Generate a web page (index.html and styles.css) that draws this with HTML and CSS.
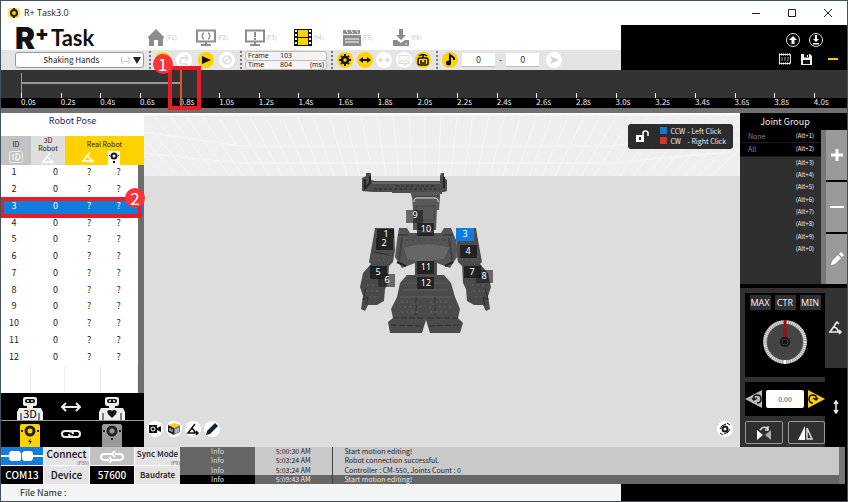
FILE: index.html
```
<!DOCTYPE html>
<html lang="en">
<head>
    <meta charset="UTF-8">
    <meta name="viewport" content="width=device-width, initial-scale=1.0">
    <title>R+ Task3.0</title>
    <link rel="stylesheet" href="styles.css">
</head>
<body>
<div class="window">

    <div class="titlebar">
        <svg width="12" height="10" viewBox="0 0 12 10"><rect width="12" height="10" rx="3" fill="#ffe14d"/><circle cx="6" cy="5" r="3" fill="#ffd200" stroke="#222" stroke-width="2"/><path d="M6 0v2M6 8v2" stroke="#222" stroke-width="2"/></svg>
        <span class="app-name">R+ Task3.0</span>
        <button class="win-btn" aria-label="Minimize"><svg width="10" height="10"><path d="M1 5.500h8" stroke="#222"/></svg></button>
        <button class="win-btn" aria-label="Maximize"><svg width="10" height="10"><path d="M1.500 1.500h7v7h-7z" fill="none" stroke="#222"/></svg></button>
        <button class="win-btn" aria-label="Close"><svg width="10" height="10"><path d="M1 1l8 8M9 1l-8 8" stroke="#222"/></svg></button>
    </div>

    <header class="header">
        <div class="header-left">
            <nav class="nav">
                <div class="logo"><span class="logo-r">R</span><span class="logo-plus">+</span><span class="logo-task">Task</span></div>
                <button class="nav-btn"><svg width="18" height="17" viewBox="0 0 18 17"><path d="M1 9v-1L9 0l8 8v1h-1v8h-5v-6H7v6H2V9z" fill="#8c8c8c"/></svg><small>(F1)</small></button>
                <button class="nav-btn"><svg width="20" height="17" viewBox="0 0 20 17"><path d="M1 1.500h18v11H1z" fill="none" stroke="#8c8c8c" stroke-width="2"/><path d="M5 16h10M10 13v3" stroke="#8c8c8c" stroke-width="2"/><path d="M8 4c-2 0-1 3-2.500 3C7 7 6 10 8 10M12 4c2 0 1 3 2.500 3-1.500 0-.5 3-2.500 3" fill="none" stroke="#8c8c8c" stroke-width="1.500"/></svg><small>(F2)</small></button>
                <button class="nav-btn"><svg width="20" height="17" viewBox="0 0 20 17"><path d="M1 1.500h18v11H1z" fill="none" stroke="#8c8c8c" stroke-width="2"/><path d="M5 16h10M10 13v3M10 3v5M10 9v2" stroke="#8c8c8c" stroke-width="2"/></svg><small>(F3)</small></button>
                <button class="nav-btn"><svg width="18" height="17" viewBox="0 0 18 17"><path d="M0 0h18v17H0z" fill="#111"/><path d="M4 1h10v7H4zM4 9h10v7H4z" fill="#ffd200"/><path d="M2 1v16M16 1v16" stroke="#fff" stroke-width="2" stroke-dasharray="2 2"/></svg><small>(F4)</small></button>
                <button class="nav-btn"><svg width="18" height="17" viewBox="0 0 18 17"><path d="M0 1h17v4H0zM0 6h18v11H0z" fill="#8c8c8c"/><path d="M3 1l2 3M8 1l2 3M13 1l2 3M2 10h14M2 13h14" stroke="#fff"/></svg><small>(F5)</small></button>
                <button class="nav-btn"><svg width="18" height="17" viewBox="0 0 18 17"><path d="M7 0h4v6h3l-5 5-5-5h3zM1 11h4l4 3 4-3h4v6H1z" fill="#8c8c8c"/><path d="M13 15h2" stroke="#fff"/></svg><small>(F6)</small></button>
            </nav>
            <div class="toolbar">
                <button class="motion-select"><span class="motion-name">Shaking Hands</span><span class="motion-key">(--)</span><svg width="8" height="7"><path d="M0 0h8L4 7z" fill="#222"/></svg></button>
                <i class="dots"></i>
                <div class="tools tools-edit">
                    <button class="round on" aria-label="Undo"><svg viewBox="0 0 16 16"><path d="M4 6h6q3 0 3 3t-3 3H7M7 3L4 6l3 3" fill="none" stroke="#111" stroke-width="2"/></svg></button>
                    <button class="round" aria-label="Redo"><svg viewBox="0 0 16 16"><path d="M11 6H7Q4 6 4 9t3 3h5M9 3l3 3-3 3" fill="none" stroke="#dcdcdc" stroke-width="1.500"/></svg></button>
                    <button class="round on" aria-label="Play"><svg viewBox="0 0 16 16"><path d="M4 4l9 4-9 4z" fill="#111"/></svg></button>
                    <button class="round" aria-label="Stop"><svg viewBox="0 0 16 16"><circle cx="8" cy="8" r="4" fill="none" stroke="#dcdcdc" stroke-width="1.500"/><path d="M5 11l6-6" stroke="#dcdcdc" stroke-width="1.500"/></svg></button>
                </div>
                <i class="dots"></i>
                <div class="frame-info">
                    <div class="field"><label for="frame">Frame</label><input id="frame" value="103"></div>
                    <div class="field"><label for="time">Time</label><input id="time" value="804"><span>(ms)</span></div>
                </div>
                <i class="dots"></i>
                <div class="tools tools-view">
                    <button class="round on" aria-label="Settings"><svg viewBox="0 0 16 16"><circle cx="8" cy="8" r="3" fill="none" stroke="#111" stroke-width="2.500"/><path d="M8 2v2M8 12v2M2 8h2M12 8h2M4 4l1 1M11 11l1 1M12 4l-1 1M4 12l1-1" stroke="#111" stroke-width="2"/></svg></button>
                    <button class="round on" aria-label="Width"><svg viewBox="0 0 16 16"><path d="M2 8l4-3v2h4V5l4 3-4 3V9H6v2z" fill="#111"/></svg></button>
                    <button class="round" aria-label="Spread"><svg viewBox="0 0 16 16"><path d="M2 8l3-3v2h2v2H5v2zM14 8l-3-3v2H9v2h2v2z" fill="#dcdcdc"/></svg></button>
                    <button class="round" aria-label="Image"><svg viewBox="0 0 16 16"><path d="M3 3.500h10v8H3zM3 11l3-3 2 2 2-3 3 4M7 13h4" fill="none" stroke="#dcdcdc"/></svg></button>
                    <button class="round on" aria-label="Robot"><svg viewBox="0 0 16 16"><rect x="3" y="6" width="10" height="7" rx="2" fill="none" stroke="#111" stroke-width="1.500"/><path d="M5 9h2M9 9h2M5 11h6M8 3v3M4 4q4-3 8 0" stroke="#111" stroke-width="1.500" fill="none"/></svg></button>
                </div>
                <i class="dots"></i>
                <div class="tools tools-music">
                    <button class="round on" aria-label="Music"><svg viewBox="0 0 16 16"><path d="M8 11V3l4 3v2" fill="none" stroke="#111" stroke-width="2"/><circle cx="6.500" cy="11" r="2.500" fill="#111"/></svg></button>
                    <input class="range" aria-label="From" value="0">
                    <span class="range-dash">-</span>
                    <input class="range" aria-label="To" value="0">
                    <button class="round play-music" aria-label="Play music"><svg viewBox="0 0 16 16"><path d="M4 4l9 4-9 4 2-4z" fill="#d4d4d4"/></svg></button>
                </div>
            </div>
        </div>
        <div class="header-right">
            <div class="header-row header-row-top">
                <button class="icon-btn" aria-label="Upload"><svg width="16" height="16" viewBox="0 0 16 16"><circle cx="8" cy="8" r="6.500" fill="none" stroke="#ddd"/><path d="M8 4l4 4h-2.500v4h-3V8H4z" fill="#fff"/></svg></button>
                <button class="icon-btn" aria-label="Download"><svg width="16" height="16" viewBox="0 0 16 16"><circle cx="8" cy="8" r="6.500" fill="none" stroke="#ddd"/><path d="M8 10L5 7h2V3h2v4h2zM5 11h6v1.500H5z" fill="#fff"/></svg></button>
            </div>
            <div class="header-row">
                <button class="icon-btn" aria-label="Export"><svg width="12" height="12" viewBox="0 0 12 12"><path d="M.5 1.500h11v9H.5z" fill="none" stroke="#ddd"/><path d="M0 1.500h12M0 10.500h12" stroke="#fff" stroke-width="2" stroke-dasharray="1 1"/><path d="M2 5h8M2 7h8" stroke="#999" stroke-dasharray="2 1"/></svg></button>
                <button class="icon-btn" aria-label="Save"><svg width="11" height="11" viewBox="0 0 11 11"><path d="M0 0h9l2 2v9H0z" fill="#eee"/><path d="M3 0h5v3.500H3zM2 6h7v4H2z" fill="#111"/><path d="M6 1h1v2H6z" fill="#eee"/></svg></button>
                <button class="icon-btn collapse" aria-label="Collapse"><svg width="10" height="3"><path d="M0 0h10v2H0z" fill="#f5c800"/></svg></button>
            </div>
        </div>
    </header>

    <section class="timeline">
        <div class="track"><div class="clip"></div></div>
        <ol class="ticks">
            <li>0.0s</li><li>0.2s</li><li>0.4s</li><li>0.6s</li><li>0.8s</li><li>1.0s</li><li>1.2s</li>
            <li>1.4s</li><li>1.6s</li><li>1.8s</li><li>2.0s</li><li>2.2s</li><li>2.4s</li><li>2.6s</li>
            <li>2.8s</li><li>3.0s</li><li>3.2s</li><li>3.4s</li><li>3.6s</li><li>3.8s</li><li>4.0s</li>
        </ol>
        <div class="cursor"></div>
        <div class="mark mark-time"><b>1</b></div>
    </section>

    <main class="main">
        <aside class="pose">
            <h2>Robot Pose</h2>
            <div class="pose-body">
                <table>
                    <thead>
                        <tr>
                            <th class="col-id">ID<svg width="14" height="12" viewBox="0 0 14 12"><rect x=".5" y=".5" width="13" height="11" rx="2" fill="none" stroke="#eee"/><path d="M4 3v6M7 3v6h2q2-1 2-3T9 3z" fill="none" stroke="#eee" stroke-width="1.500"/></svg></th>
                            <th class="col-3d">3D<br>Robot<svg width="14" height="12" viewBox="0 0 14 12"><path d="M9 1L2 10h10M6 5q3 1 3 5M10 8l2 2-2 2" fill="none" stroke="#fff" stroke-width="1.500"/></svg></th>
                            <th class="col-real" colspan="2">Real Robot
                                <div class="real-icons">
                                    <svg width="14" height="12" viewBox="0 0 14 12"><path d="M9 1L2 10h10M6 5q3 1 3 5M10 8l2 2-2 2" fill="none" stroke="#fff" stroke-width="1.500"/></svg>
                                    <svg width="12" height="14" viewBox="0 0 12 14"><path d="M0 0h12v14H0z" fill="#fff"/><circle cx="6" cy="5" r="2.500" fill="none" stroke="#111" stroke-width="2"/><path d="M1 4h1v1H1zM10 4h1v1h-1zM5 10h2v2H5z" fill="#111"/></svg>
                                </div>
                            </th>
                        </tr>
                    </thead>
                    <tbody>
                        <tr><td>1</td><td>0</td><td>?</td><td>?</td></tr>
                        <tr><td>2</td><td>0</td><td>?</td><td>?</td></tr>
                        <tr class="selected"><td>3</td><td>0</td><td>?</td><td>?</td></tr>
                        <tr><td>4</td><td>0</td><td>?</td><td>?</td></tr>
                        <tr><td>5</td><td>0</td><td>?</td><td>?</td></tr>
                        <tr><td>6</td><td>0</td><td>?</td><td>?</td></tr>
                        <tr><td>7</td><td>0</td><td>?</td><td>?</td></tr>
                        <tr><td>8</td><td>0</td><td>?</td><td>?</td></tr>
                        <tr><td>9</td><td>0</td><td>?</td><td>?</td></tr>
                        <tr><td>10</td><td>0</td><td>?</td><td>?</td></tr>
                        <tr><td>11</td><td>0</td><td>?</td><td>?</td></tr>
                        <tr><td>12</td><td>0</td><td>?</td><td>?</td></tr>
                    </tbody>
                </table>
                <div class="pose-empty"><i></i><i></i><i></i><i></i></div>
                <div class="mark mark-joint"><b>2</b></div>
            </div>
            <div class="pose-actions">
                <button aria-label="3D robot"><svg width="26" height="24" viewBox="0 0 26 24"><rect x="6" y="1" width="14" height="9" rx="2" fill="#eee"/><rect x="8" y="3" width="10" height="4" rx="2" fill="#111"/><circle cx="11" cy="5" r="1" fill="#fff"/><circle cx="15" cy="5" r="1" fill="#fff"/><path d="M10 10h6v2h8l2 4v8H0v-8l2-4h8z" fill="#eee"/><path d="M4 17v7M22 17v7" stroke="#111"/><text x="13" y="22" class="icon-3d">3D</text></svg></button>
                <button aria-label="Copy pose"><svg width="22" height="10" viewBox="0 0 22 10"><path d="M2 5h18M6 1L2 5l4 4M16 1l4 4-4 4" fill="none" stroke="#eee" stroke-width="2"/></svg></button>
                <button aria-label="Real robot"><svg width="26" height="24" viewBox="0 0 26 24"><rect x="6" y="1" width="14" height="9" rx="2" fill="#eee"/><rect x="8" y="3" width="10" height="4" rx="2" fill="#111"/><circle cx="11" cy="5" r="1" fill="#fff"/><circle cx="15" cy="5" r="1" fill="#fff"/><path d="M10 10h6v2h8l2 4v8H0v-8l2-4h8z" fill="#eee"/><path d="M4 17v7M22 17v7" stroke="#111"/><path d="M13 22l-4-4q-2-4 2-4 1 0 2 1 1-1 2-1 4 0 2 4z" fill="#111"/></svg></button>
            </div>
            <div class="pose-actions">
                <button aria-label="Torque on"><svg width="20" height="23" viewBox="0 0 20 23"><path d="M0 2q0-2 2-2h16q2 0 2 2v21H0z" fill="#ffd200"/><circle cx="10" cy="7" r="4" fill="none" stroke="#222" stroke-width="3"/><path d="M1 6h2v2H1zM17 6h2v2h-2zM11 14l-3 4h2l-1 3 3-4h-2z" fill="#222"/></svg></button>
                <button aria-label="Link"><svg width="22" height="10" viewBox="0 0 22 10"><path d="M13 7q-1 1-3 1H5Q2 8 2 5t3-3h4q4 0 4 3M9 3q1-1 3-1h5q3 0 3 3t-3 3h-4Q9 8 9 5" fill="none" stroke="#eee" stroke-width="2"/></svg></button>
                <button aria-label="Torque off"><svg width="20" height="23" viewBox="0 0 20 23"><path d="M0 2q0-2 2-2h16q2 0 2 2v21H0z" fill="#999"/><circle cx="10" cy="7" r="4" fill="none" stroke="#222" stroke-width="3"/><path d="M1 6h2v2H1zM17 6h2v2h-2zM9 14h2v2H9z" fill="#222"/></svg></button>
            </div>
        </aside>

        <section class="viewport">
            <svg class="scene" viewBox="144 113 596 334" preserveAspectRatio="xMidYMin slice">
                <path d="M144 113h596v334H144z" fill="#ddd"/>
                <path d="M144 115h596v61H144z" fill="#eee"/>
                <path d="M105 115l60 61M121 115l57 61M137 115l54 61M153 115l51 61M169 115l48 61M185 115l45 61M201 115l42 61M217 115l39 61M233 115l36 61M249 115l33 61M265 115l30 61M281 115l27 61M297 115l24 61M313 115l21 61M329 115l18 61M345 115l15 61M361 115l12 61M377 115l9 61M393 115l6 61M409 115l3 61M425 115v61M441 115l-3 61M457 115l-6 61M473 115l-9 61M489 115l-12 61M505 115l-15 61M521 115l-18 61M537 115l-21 61M553 115l-24 61M569 115l-27 61M585 115l-30 61M601 115l-33 61M617 115l-36 61M633 115l-39 61M649 115l-42 61M665 115l-45 61M681 115l-48 61M697 115l-51 61M713 115l-54 61M729 115l-57 61M745 115l-60 61M761 115l-63 61M777 115l-66 61M144 132l96 14h370l130-16M144 153l96 10h370l130-12" fill="none" stroke="#f5f5f5"/>
                <path d="M144 113h596v2H144z" fill="#fff"/>

                <!-- head bar and neck -->
                <path d="M362 178l4-2v-3h5v7l4 1h65v-5l1-3h3v5l3 2v11l-3 1h-2v2h-18v-1h-32v-1h-19l-11-1z" fill="#4c4c4c"/>
                <path d="M365 179v9l5-5v-7M444 177v11" stroke="#222" stroke-width="2" fill="none"/>
                <path d="M372 183h68" stroke="#666" stroke-width="2"/>
                <path d="M374 189h62M396 186h40" stroke="#2b2b2b" stroke-dasharray="3 2" fill="none"/>
                <path d="M410 192h30v5l-1 13h-2l-1 20h-23v-20l-1-13z" fill="#595959"/>
                <path d="M414 202v-2l2-2h20l2 2v2" fill="none" stroke="#ddd"/>
                <path d="M412 196h27M416 206h18v14h-18z" fill="none" stroke="#444"/>

                <!-- arms -->
                <g id="arm">
                    <path d="M375 228h19l1 22-2 12-4 4h-16l-4-4 4-22z" fill="#4d4d4d"/>
                    <path d="M371 264h18l-1 19-3 6-1 12-7 4h-9l-3 6-4-2 2-13-3-9 3-14z" fill="#4a4a4a"/>
                    <path d="M372 256h18M373 260h16M367 285h16M366 291h15M369 297h10" stroke="#626262" stroke-dasharray="2 3"/>
                    <path d="M374 252l15 3M370 266l15 3M366 288l-3 12 5-3-2 8" stroke="#2b2b2b" fill="none"/>
                </g>
                <use href="#arm" transform="matrix(-1 0 0 1 851 0)"/>

                <!-- body -->
                <path d="M399 228h8l3 5h31l3-5h7l5 12 1 17-7 11-13-5h-22l-13 5-7-11 2-17z" fill="#555"/>
                <path d="M402 238l-3 22M449 238l3 22M398 235h10M443 235h10" stroke="#404040" stroke-width="2"/>
                <path d="M403 247l15-3h17l15 3-5 12-20 4-18-3z" fill="#666" stroke="#505050"/>
                <path d="M405 240h41" stroke="#444" stroke-dasharray="4 2"/>
                <path d="M397 262l9 4M453 262l-8 4" stroke="#222" stroke-width="2"/>

                <!-- legs -->
                <path d="M415 263h22v12h7l7 8 4 14 5 12-2 9 5 5-3 10h-30l-4-13-4 13h-32l-2-11 5-4-2-9 6-12 3-14 7-8h8z" fill="#4b4b4b"/>
                <path d="M404 283h17M431 283h17M402 290h46M400 297h53" stroke="#606060"/>
                <path d="M401 302h18M399 307h22M401 312h20M430 302h19M429 307h22M430 312h20" stroke="#666" stroke-dasharray="2 3"/>
                <path d="M393 318h30M428 318h32M391 325l30 1M429 326l31-1M416 297v18M435 297v18" stroke="#303030" stroke-dasharray="6 2"/>

                <!-- joint numbers -->
                <g class="joint">
                    <path class="faded" d="M406 210h17v13h-17zM378 274h17v13h-17zM476 270h17v13h-17z"/>
                    <path d="M377 229h17v9h-17zM376 238h17v12h-17zM417 223h17v13h-17zM460 245h17v13h-17zM370 266h17v13h-17zM464 266h17v12h-17zM417 261h17v13h-17zM417 277h17v12h-17z"/>
                    <path class="active" d="M456 228h18v13h-18z"/>
                    <text x="415" y="218">9</text><text x="426" y="232">10</text>
                    <text x="386" y="237">1</text><text x="384" y="246">2</text>
                    <text x="465" y="237">3</text><text x="468" y="254">4</text>
                    <text x="378" y="275">5</text><text x="387" y="283">6</text>
                    <text x="472" y="275">7</text><text x="484" y="279">8</text>
                    <text x="426" y="270">11</text><text x="426" y="286">12</text>
                </g>
            </svg>
            <div class="legend">
                <svg width="14" height="12" viewBox="0 0 14 12"><path d="M0 5h8v7H0z" fill="#fff"/><path d="M7 5V3q0-2 2.500-2T12 3v3" fill="none" stroke="#fff" stroke-width="1.500"/><path d="M3 7h2v3H3z" fill="#333"/></svg>
                <dl>
                    <dt class="ccw">CCW</dt><dd>- Left Click</dd>
                    <dt class="cw">CW</dt><dd>- Right Click</dd>
                </dl>
            </div>
            <div class="view-tools">
                <button class="round" aria-label="Camera"><svg viewBox="0 0 16 16"><path d="M2 4h8v8H2zM10 7l4-2v6l-4-2z" fill="#111"/><circle cx="6" cy="8" r="2" fill="none" stroke="#fff"/></svg></button>
                <button class="round" aria-label="Cube"><svg viewBox="0 0 16 16"><path d="M8 2l6 2-6 3-6-3z" fill="#ffd200"/><path d="M2 4l6 3v7l-6-3z" fill="#222"/><path d="M14 4L8 7v7l6-3z" fill="#777"/><path d="M4 7v3M6 8v3M10 8v4M12 7v4" stroke="#eee"/></svg></button>
                <button class="round" aria-label="Angle"><svg viewBox="0 0 16 16"><path d="M10 3L3 12h10M6 7q3 1 4 5M11 10l2 2-2 2" fill="none" stroke="#111" stroke-width="1.500"/></svg></button>
                <button class="round" aria-label="Edit"><svg viewBox="0 0 16 16"><path d="M2 14l1-4 8-8 3 3-8 8z" fill="#18203a"/></svg></button>
                <button class="round view-reset" aria-label="Reset view"><svg viewBox="0 0 16 16"><circle cx="8" cy="8" r="2.500" fill="none" stroke="#111" stroke-width="2"/><path d="M3 8q1-4 6-5M13 8q-1 4-6 5M10 2l3 2M3 12l3 2" fill="none" stroke="#111"/></svg></button>
            </div>
        </section>

        <aside class="side">
            <h2>Joint Group</h2>
            <div class="groups">
                <ul>
                    <li class="named"><span>None</span><kbd>(Alt+1)</kbd></li>
                    <li class="named"><span>All</span><kbd>(Alt+2)</kbd></li>
                    <li><kbd>(Alt+3)</kbd></li>
                    <li><kbd>(Alt+4)</kbd></li>
                    <li><kbd>(Alt+5)</kbd></li>
                    <li><kbd>(Alt+6)</kbd></li>
                    <li><kbd>(Alt+7)</kbd></li>
                    <li><kbd>(Alt+8)</kbd></li>
                    <li><kbd>(Alt+9)</kbd></li>
                    <li><kbd>(Alt+0)</kbd></li>
                </ul>
                <div class="group-buttons">
                    <button aria-label="Add"><svg width="14" height="14"><path d="M7 1v12M1 7h12" stroke="#fff" stroke-width="3"/></svg></button>
                    <button aria-label="Remove"><svg width="14" height="14"><path d="M0 7h14" stroke="#fff" stroke-width="2"/></svg></button>
                    <button aria-label="Edit group"><svg width="14" height="14" viewBox="0 0 14 14"><path d="M1 13l1-4 6-6 3 3-6 6zM9 2l2-2 3 3-2 2z" fill="#fff"/></svg></button>
                </div>
            </div>
            <div class="control">
                <div class="control-main">
                    <div class="dial-box">
                        <div class="presets"><button>MAX</button><button>CTR</button><button>MIN</button></div>
                        <svg width="46" height="46" viewBox="0 0 46 46"><circle cx="23" cy="23" r="20" fill="#444" stroke="#999" stroke-width="4"/><circle cx="23" cy="23" r="20" fill="none" stroke="#eee" stroke-width="3" stroke-dasharray="1 1"/><path d="M23 41v4" stroke="#fff" stroke-width="2"/><path d="M23 1v22" stroke="#a30d12" stroke-width="3"/><circle cx="23" cy="23" r="5" fill="#111"/><circle cx="23" cy="23" r="3" fill="none" stroke="#444"/></svg>
                    </div>
                    <div class="angle-box">
                        <button aria-label="Turn left"><svg width="18" height="18" viewBox="0 0 18 18"><path d="M0 9l17-9v18z" fill="#bbb"/><path d="M9 9q-1-4 3-4t4 4-4 4M7 8l2 2 3-2" fill="none" stroke="#111" stroke-width="1.500"/></svg></button>
                        <input aria-label="Angle" value="0.00">
                        <button aria-label="Turn right"><svg width="18" height="18" viewBox="0 0 18 18"><path d="M18 9L1 0v18z" fill="#ffd200"/><path d="M9 9q1-4-3-4T2 9t4 4M11 8l-2 2-3-2" fill="none" stroke="#111" stroke-width="1.500"/></svg></button>
                    </div>
                    <div class="flip-buttons">
                        <button aria-label="Swap"><svg width="14" height="14" viewBox="0 0 14 14"><path d="M0 4l6 5-6 5z" fill="#fff"/><path d="M14 4L8 9l6 5z" fill="#aaa"/><path d="M3 4q4-5 8-1M8 4h3V0" fill="none" stroke="#ddd" stroke-width="1.500"/></svg></button>
                        <button aria-label="Mirror"><svg width="16" height="14" viewBox="0 0 16 14"><path d="M7 0v14H0z" fill="#fff"/><path d="M9 2v11h5z" fill="none" stroke="#ddd" stroke-width="1.500"/></svg></button>
                    </div>
                </div>
                <div class="tabs">
                    <button class="tab-on" aria-label="Angle tab"><svg width="14" height="14" viewBox="0 0 14 14"><path d="M8 1L1 11h11M5 6q4 1 4 5M10 9l2 2-2 2M6 3l2-2 2 2" fill="none" stroke="#eee" stroke-width="1.500"/></svg></button>
                    <button aria-label="Move tab"><svg width="6" height="14" viewBox="0 0 6 14"><path d="M3 2v10M1 4l2-3 2 3M1 10l2 3 2-3" fill="none" stroke="#eee" stroke-width="1.500"/></svg></button>
                </div>
            </div>
        </aside>
    </main>

    <section class="status">
        <div class="connection">
            <button class="cell blue" aria-label="Connected"><svg width="42" height="12" viewBox="0 0 42 12"><path d="M0 6h9M31 6h11" stroke="#fff" stroke-width="2"/><path d="M8 4q0-3 3-3h7l2 2v7l-2 1h-7q-3 0-3-3zM21 3l2-2h6q3 0 3 3v4q0 3-3 3h-6l-2-2z" fill="#fff"/></svg></button>
            <button class="cell keyed">Connect<small>(F10)</small></button>
            <button class="cell grey" aria-label="Sync"><svg width="26" height="13" viewBox="0 0 26 13"><path d="M10 10H6Q2 10 2 7t4-3h9M16 4h4q4 0 4 3t-4 3h-9M16 1l-3 3 3 3M10 7l3 3-3 3" fill="none" stroke="#fff" stroke-width="2"/></svg></button>
            <button class="cell keyed small">Sync Mode<small>(F9)</small></button>
            <div class="cell black">COM13</div>
            <button class="cell">Device</button>
            <div class="cell black">57600</div>
            <button class="cell small">Baudrate</button>
        </div>
        <table class="log">
            <tr><td>Info</td><td>5:00:30 AM</td><td>Start motion editing!</td></tr>
            <tr><td>Info</td><td>5:03:24 AM</td><td>Robot connection successful.</td></tr>
            <tr><td>Info</td><td>5:03:24 AM</td><td>Controller : CM-550, Joints Count : 0</td></tr>
            <tr class="last"><td>Info</td><td>5:09:43 AM</td><td>Start motion editing!</td></tr>
        </table>
    </section>

    <footer class="footer"><div class="file-name">File Name :</div></footer>
</div>
</body>
</html>
```

FILE: styles.css
```
* {
    box-sizing: border-box;
}
body {
    margin: 0;
    font-family: "Noto Sans CJK KR", "Noto Sans", sans-serif;
    font-size: 9px;
    line-height: 12px;
    color: #222;
    background: #000;
}
button, input {
    font: inherit;
    color: inherit;
    margin: 0;
    padding: 0;
    border: none;
    background: none;
    min-width: 0;
}
button {
    display: flex;
    align-items: center;
    justify-content: center;
    white-space: nowrap;
    cursor: pointer;
}
svg {
    display: block;
    flex: none;
}
h2 {
    margin: 0;
    font-size: 9px;
    font-weight: 400;
    text-align: center;
}
.window {
    display: flex;
    flex-direction: column;
    min-height: 100vh;
    border: 1px solid #43505f;
    overflow: hidden;
}

/* title bar */
.titlebar {
    display: flex;
    align-items: center;
    height: 24px;
    padding: 0 1px 0 7px;
    background: #fff;
}
.app-name {
    flex: 1;
    margin-left: 4px;
    font-family: "Open Sans", sans-serif;
}
.win-btn {
    width: 36px;
    height: 22px;
}

/* header */
.header {
    display: flex;
    height: 45px;
}
.header-left {
    flex: 0 0 73.300%;
    background: #fff;
}
.header-right {
    flex: 1;
    background: #000;
    display: flex;
    flex-direction: column;
    align-items: flex-end;
    padding: 6px 9px 0 0;
}
.header-row {
    display: flex;
    align-items: center;
    gap: 10px;
    height: 20px;
}
.header-row-top {
    gap: 7px;
    padding-right: 14px;
    height: 18px;
}
.collapse {
    margin-left: 6px;
}
.nav {
    display: flex;
    align-items: center;
    height: 25px;
    padding-left: 14px;
}
.logo {
    display: flex;
    align-items: flex-start;
    width: 132px;
    color: #111;
    line-height: 24px;
}
.logo-r {
    font-family: Inter, sans-serif;
    font-size: 30px;
    font-weight: 900;
}
.logo-plus {
    font-family: Inter, sans-serif;
    font-size: 20px;
    font-weight: 900;
    line-height: 14px;
}
.logo-task {
    margin-left: 2px;
    font-family: Lato, sans-serif;
    font-size: 22px;
    font-weight: 700;
}
.nav-btn {
    width: 49px;
    justify-content: flex-start;
    gap: 1px;
}
.nav-btn small {
    font-size: 6px;
    color: #c4c4c4;
}
.toolbar {
    display: flex;
    align-items: center;
    height: 20px;
    padding-left: 14px;
    background: #e4e4e4;
}
.motion-select {
    width: 129px;
    height: 16px;
    padding-right: 2px;
    border: 1px solid #999;
    border-radius: 3px;
    background: #fff;
    font-size: 8px;
}
.motion-name {
    flex: 1;
    padding-left: 6px;
}
.motion-key {
    margin-right: 3px;
    font-size: 7px;
    color: #888;
}
.dots {
    height: 18px;
    margin: 0 4px 0 5px;
    border-left: 2px dotted #777;
}
.tools {
    display: flex;
    align-items: center;
    justify-content: space-between;
}
.tools-edit {
    width: 80px;
}
.tools-view {
    width: 94px;
}
.tools-music {
    gap: 4px;
}
.round {
    width: 16px;
    height: 16px;
    border-radius: 50%;
    background: #fff;
}
.round svg {
    width: 16px;
    height: 16px;
}
.round.on {
    background: #ffd200;
}
.frame-info {
    width: 80px;
}
.field {
    display: flex;
    height: 8px;
    margin: 1px 0;
    padding: 0 2px;
    font-family: "Noto Sans", sans-serif;
    font-size: 7px;
    line-height: 8px;
    background: #f4f4f4;
    border-radius: 2px;
    outline: 1px solid #bbb;
}
.field label {
    width: 32px;
}
.field input {
    flex: 1;
    width: 20px;
}
.range {
    width: 33px;
    height: 14px;
    border-bottom: 1px solid #bbb;
    background: #fff;
    text-align: center;
    color: #2a3554;
}
.play-music {
    margin-left: 3px;
}

/* timeline */
.timeline {
    position: relative;
    height: 43px;
    background: #333;
    border-bottom: 5px solid #707070;
}
.track {
    height: 23px;
    padding: 3px 0 0 20px;
}
.clip {
    width: 19.300%;
    height: 20px;
    border-left: 1px solid #999;
    background: linear-gradient(#999, #999) 0 9px / 100% 2px no-repeat;
}
.ticks {
    display: flex;
    margin: 0;
    padding: 0 0 0 20px;
    list-style: none;
    overflow: hidden;
    background: linear-gradient(#333 5px, #000 5px);
}
.ticks li {
    flex: 0 0 4.800%;
    height: 15px;
    padding-top: 4px;
    font-size: 8px;
    line-height: 10px;
    color: #eee;
    background: linear-gradient(#fff, #fff) 0 0 / 1px 5px no-repeat;
}
.cursor {
    position: absolute;
    left: 21.100%;
    top: 0;
    width: 2px;
    height: 36px;
    background: #e0561c;
}

/* red callouts over the work area */
.mark {
    position: absolute;
    border: 4px solid #ed1c24;
}
.mark b {
    position: absolute;
    width: 20px;
    height: 20px;
    border-radius: 50%;
    background: #f8333c;
    color: #fff;
    font-size: 17px;
    font-weight: 400;
    line-height: 20px;
    text-align: center;
}
.mark-time {
    left: 19.700%;
    top: -4px;
    width: 33px;
    height: 44px;
    z-index: 2;
}
.mark-time b {
    left: -19px;
    top: -16px;
}
.mark-joint {
    left: -1px;
    top: 61px;
    width: 142px;
    height: 21px;
    z-index: 2;
}
.mark-joint b {
    right: -7px;
    top: -13px;
}

/* main area */
.main {
    display: grid;
    grid-template-columns: 143px 1fr 107px;
    flex: 1;
}
.pose {
    display: flex;
    flex-direction: column;
    background: #fff;
}
.pose h2 {
    height: 23px;
    line-height: 16px;
    color: #1d2b50;
}
.pose-body {
    position: relative;
    flex: 1;
    display: flex;
    flex-direction: column;
    border-right: 6px solid #6e6e6e;
}
.pose table {
    width: 143px;
    height: 230px;
    border-collapse: collapse;
    table-layout: fixed;
}
.pose th {
    height: 29px;
    padding: 2px 0 0;
    font-size: 7px;
    font-weight: 400;
    line-height: 8px;
    vertical-align: top;
}
.pose th svg {
    margin: 0 auto;
}
.pose th.col-id {
    width: 30px;
    padding-top: 4px;
    background: #c2c2c2;
}
.pose th.col-id svg {
    margin-top: 3px;
}
.pose th.col-3d {
    width: 34px;
    padding-top: 0;
    background: #dedede;
}
.pose th.col-real {
    padding-top: 4px;
    background: #ffd200;
}
.real-icons {
    display: flex;
    padding: 3px 18px 0 10px;
}
.pose td {
    padding: 0 0 2px 22px;
    font-size: 9px;
    line-height: 12px;
    text-align: left;
}
.pose td:first-child {
    padding: 0 4px 2px 0;
    text-align: center;
}
.pose td:last-child {
    padding-left: 12px;
}
.selected td {
    color: #fff;
    background: #0f7ddb;
}
.pose-empty {
    display: grid;
    grid-template-columns: 30px 34px 36px 1fr;
    flex: 1;
}
.pose-empty i {
    border-right: 1px solid #eee;
}
.pose-actions {
    display: grid;
    grid-template-columns: 1fr 1fr 1fr;
    height: 27px;
    padding: 0 12px 0 8px;
    background: #000;
}
.pose-actions + .pose-actions {
    border-top: 1px solid #999;
}
.pose-actions button {
    align-items: flex-end;
}
.pose-actions button:nth-child(2) {
    align-items: center;
}
.icon-3d {
    font-size: 11px;
    text-anchor: middle;
}

/* 3D viewport */
.viewport {
    position: relative;
    overflow: hidden;
    background: #ddd;
}
.scene {
    position: absolute;
    width: 100%;
    height: 100%;
}
.joint path {
    fill: #1c1c1c;
    fill-opacity: .85;
}
.joint .faded {
    fill-opacity: .6;
}
.joint .active {
    fill: #0f7ddb;
    fill-opacity: 1;
}
.joint text {
    font-family: "Noto Sans", sans-serif;
    font-size: 9px;
    fill: #fff;
    text-anchor: middle;
}
.legend {
    position: absolute;
    top: 11px;
    right: 7px;
    display: flex;
    align-items: center;
    gap: 10px;
    padding: 2px 7px 3px 8px;
    border-radius: 3px;
    background: #2c2c2c;
    color: #eee;
    font-size: 7px;
    line-height: 10px;
}
.legend dl {
    display: grid;
    grid-template-columns: 27px auto;
    margin: 0;
}
.legend dt, .legend dd {
    margin: 0;
    white-space: nowrap;
}
.legend dt::before {
    content: "";
    display: inline-block;
    width: 7px;
    height: 7px;
    margin-right: 3px;
    background: #1b75c9;
}
.legend dt.cw::before {
    background: #ce3636;
}
.view-tools {
    position: absolute;
    left: 3px;
    right: 7px;
    bottom: 10px;
    display: flex;
    gap: 3px;
}
.view-reset {
    margin-left: auto;
}

/* right side */
.side {
    display: flex;
    flex-direction: column;
    background: #000;
    color: #eee;
}
.side h2 {
    height: 17px;
    padding-right: 17px;
    line-height: 17px;
}
.groups {
    display: flex;
    height: 154px;
    background: #777;
}
.groups ul {
    display: flex;
    flex-direction: column;
    width: 81px;
    margin: 0;
    padding: 0 0 29px;
    list-style: none;
    background: #2f2f2f;
}
.groups li {
    flex: 1;
    display: flex;
    align-items: center;
    padding: 0 7px 0 8px;
    line-height: 10px;
}
.groups li.named {
    background: #000;
    border-bottom: 1px solid #1a1a1a;
}
.groups li span {
    color: #888;
    font-size: 7px;
}
.groups kbd {
    margin-left: auto;
    font-family: inherit;
    font-size: 6px;
}
.group-buttons {
    display: flex;
    flex-direction: column;
    gap: 2px;
    width: 21px;
    margin-left: auto;
    background: #000;
}
.group-buttons button {
    flex: 1;
    background: #999;
}
.control {
    display: flex;
    flex: 1;
    margin-top: 4px;
    background: #303030;
}
.control-main {
    display: flex;
    flex-direction: column;
    flex: 1;
    gap: 5px;
    padding: 5px 0 3px 5px;
}
.dial-box {
    display: flex;
    flex-direction: column;
    align-items: center;
    gap: 9px;
    flex: 1;
    padding-top: 2px;
    background: #000;
}
.presets {
    display: flex;
    gap: 4px;
    font-family: "Noto Sans", sans-serif;
}
.presets button {
    width: 21px;
    height: 15px;
    background: #303030;
}
.angle-box {
    display: flex;
    align-items: center;
    justify-content: space-between;
    height: 34px;
    background: #000;
}
.angle-box input {
    width: 38px;
    height: 18px;
    border-radius: 2px;
    background: #fff;
    color: #2a3554;
    font-size: 7px;
    text-align: center;
}
.flip-buttons {
    display: flex;
    gap: 5px;
}
.flip-buttons button {
    flex: 1;
    height: 23px;
    border: 1px solid #999;
    border-radius: 2px;
}
.tabs {
    display: flex;
    flex-direction: column;
    width: 22px;
}
.tabs button {
    flex: 1;
    background: #000;
}
.tabs .tab-on {
    background: #333;
}

/* connection cells and log */
.status {
    display: flex;
    height: 37px;
    background: #000;
}
.connection {
    display: grid;
    grid-template-columns: 42px 45px 44px 45px;
    grid-template-rows: 18px 18px;
    gap: 1px;
    width: 179px;
    background: #fff;
}
.cell {
    display: flex;
    align-items: center;
    justify-content: center;
    background: #e4e4e4;
    color: #111;
    font-size: 10px;
    font-weight: 500;
    line-height: 12px;
}
.cell.small {
    font-size: 8px;
}
.cell.keyed {
    flex-direction: column;
    line-height: 12px;
}
.cell small {
    align-self: flex-end;
    font-size: 5px;
    line-height: 5px;
    color: #777;
}
.cell.blue {
    background: #0f7ddb;
}
.cell.grey {
    background: #c2c2c2;
}
.cell.black {
    background: #000;
    color: #fff;
}
.log {
    flex: 1;
    height: 37px;
    margin-right: 2px;
    border-collapse: collapse;
    border-right: 6px solid #777;
    background: #c9c9c9;
    font-size: 7px;
    line-height: 9px;
}
.log td {
    height: 9px;
    padding: 0 12px;
    white-space: nowrap;
}
.log td:first-child {
    width: 75px;
    background: #666;
    color: #ddd;
    text-align: center;
}
.log td:nth-child(2) {
    width: 77px;
    border-right: 1px solid #444;
    text-align: center;
}
.log .last td {
    background: #666;
    color: #e4e4e4;
}
.log .last td:first-child {
    background: #000;
}
.footer {
    display: flex;
    height: 17px;
}
.file-name {
    flex: 0 0 73.300%;
    padding-left: 19px;
    background: #f3f5f4;
    line-height: 17px;
}
```
